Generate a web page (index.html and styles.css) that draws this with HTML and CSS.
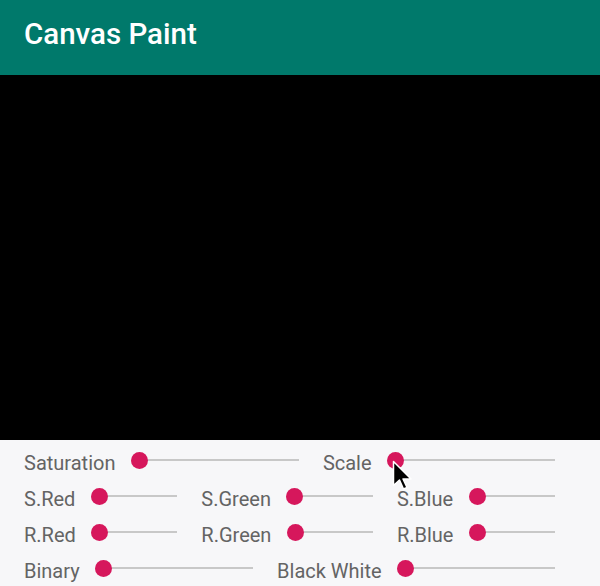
FILE: index.html
```html
<!DOCTYPE html>
<html lang="en">
<head>
    <meta charset="UTF-8">
    <meta name="viewport" content="width=device-width, initial-scale=1.0">
    <title>Canvas Paint</title>
    <link rel="stylesheet" href="styles.css">
</head>
<body>
    <div class="app">
        <header class="toolbar">
            <h1 class="title">Canvas Paint</h1>
        </header>
        <div class="canvas"></div>
        <div class="controls">
            <div class="row">
                <span class="label">Saturation</span>
                <div class="seek"><span class="thumb"></span></div>
                <span class="label">Scale</span>
                <div class="seek"><span class="thumb"></span></div>
            </div>
            <div class="row">
                <span class="label">S.Red</span>
                <div class="seek"><span class="thumb"></span></div>
                <span class="label">S.Green</span>
                <div class="seek"><span class="thumb"></span></div>
                <span class="label">S.Blue</span>
                <div class="seek"><span class="thumb"></span></div>
            </div>
            <div class="row">
                <span class="label">R.Red</span>
                <div class="seek"><span class="thumb"></span></div>
                <span class="label">R.Green</span>
                <div class="seek"><span class="thumb"></span></div>
                <span class="label">R.Blue</span>
                <div class="seek"><span class="thumb"></span></div>
            </div>
            <div class="row">
                <span class="label">Binary</span>
                <div class="seek"><span class="thumb"></span></div>
                <span class="label">Black White</span>
                <div class="seek"><span class="thumb"></span></div>
            </div>
        </div>
        <!-- mouse pointer over the Scale slider -->
        <svg class="cursor" width="21" height="31" viewBox="0 0 21 31">
            <path d="M1.5 1.5 L1.5 25.5 L7.5 20 L11.5 29 L15 27.5 L11 19 L19 19 Z" fill="#000" stroke="#fff" stroke-width="1.5" stroke-linejoin="round"/>
        </svg>
    </div>
</body>
</html>
```

FILE: styles.css
```css
body {
    margin: 0;
    padding: 0;
    font-family: Roboto, 'Noto Sans', sans-serif;
    background-color: #f7f7f9;
    overflow: hidden;
}
.app {
    position: relative;
    width: 600px;
    height: 586px;
    display: flex;
    flex-direction: column;
}
.toolbar {
    height: 75px;
    box-sizing: border-box;
    padding: 0 24px 6px;
    display: flex;
    align-items: center;
    background-color: #00796b;
}
.title {
    margin: 0;
    color: #fff;
    font-size: 29.5px;
    font-weight: 500;
}
.canvas {
    height: 366px;
    background-color: #000;
}
.controls {
    flex: 1;
    padding: 2px 45px 0 24px;
    background-color: #f7f7f9;
}
.row {
    height: 36px;
    display: flex;
    align-items: center;
}
.label {
    padding-top: 6px;
    font-size: 20px;
    color: #646464;
    white-space: nowrap;
}
.seek {
    flex: 1 1 0;
    position: relative;
    height: 2px;
    margin-left: 24px;
    background-color: #c8c8c8;
}
.seek + .label {
    margin-left: 24px;
}
.thumb {
    position: absolute;
    left: -8.5px;
    top: -7.5px;
    width: 17px;
    height: 17px;
    border-radius: 50%;
    background-color: #d6175c;
}
.cursor {
    position: absolute;
    left: 392px;
    top: 460px;
}
```
